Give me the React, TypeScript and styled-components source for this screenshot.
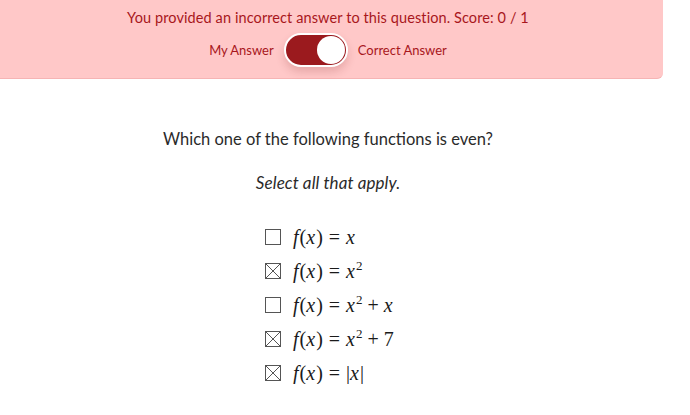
import React from "react";
import styled, { createGlobalStyle } from "styled-components";

const Global = createGlobalStyle`
  html, body { margin: 0; padding: 0; background: #ffffff; overflow: hidden; }
  body { font-family: "Lato", "Open Sans", sans-serif; }
`;

const Page = styled.div`
  width: 656px;
  display: flex;
  flex-direction: column;
  align-items: center;
`;

const Banner = styled.div`
  align-self: stretch;
  margin: 0 -7px;
  height: 79px;
  box-sizing: border-box;
  background: #ffc8c8;
  border-bottom: 1px solid #f6b4b4;
  border-bottom-right-radius: 6px;
  display: flex;
  flex-direction: column;
  align-items: center;
  padding-top: 8px;
  color: #a8171c;
`;

const BannerTitle = styled.div`
  font-size: 14.5px;
  line-height: 20px;
  letter-spacing: 0.1px;
`;

const ToggleRow = styled.div`
  display: flex;
  align-items: center;
  gap: 10px;
  margin-top: 5px;
  font-size: 13px;
`;

const Switch = styled.div`
  width: 64px;
  height: 34px;
  box-sizing: border-box;
  border-radius: 17px;
  background: #9b1a1e;
  border: 2px solid #ffffff;
  display: flex;
  align-items: center;
  justify-content: flex-end;
  padding-right: 1px;
  box-shadow: 0 5px 8px rgba(120, 30, 30, 0.18);
`;

const Knob = styled.div`
  width: 28px;
  height: 28px;
  border-radius: 50%;
  background: #ffffff;
`;

const Question = styled.div`
  margin-top: 49px;
  font-size: 16.5px;
  color: #2a2a2a;
  line-height: 22px;
`;

const Instruction = styled.div`
  margin-top: 22px;
  font-size: 17px;
  font-style: italic;
  color: #2a2a2a;
  line-height: 22px;
  letter-spacing: 0.1px;
`;

const Options = styled.div`
  margin-top: 32px;
  display: flex;
  flex-direction: column;
  gap: 12px;
  align-self: flex-start;
  margin-left: 265px;
`;

const Option = styled.div`
  display: flex;
  align-items: center;
  gap: 12px;
  height: 22px;
`;

const Math = styled.span`
  font-family: "Liberation Serif", "DejaVu Serif", serif;
  font-size: 20px;
  line-height: 22px;
  color: #1a1a1a;
  white-space: nowrap;
`;

const I = styled.i`
  font-style: italic;
  padding-right: 1px;
`;

const Rel = styled.span`
  margin: 0 6px;
`;

const Bin = styled.span`
  margin: 0 5px;
`;

const Sup = styled.sup`
  font-size: 13px;
  vertical-align: 8px;
  line-height: 0;
`;

const Box = ({ checked }: { checked: boolean }) => (
  <svg width="16" height="16" viewBox="0 0 16 16">
    <rect x="0.5" y="0.5" width="15" height="15" fill="none" stroke="#555" strokeWidth="1" />
    {checked && (
      <path d="M1 1 L15 15 M15 1 L1 15" stroke="#555" strokeWidth="1" fill="none" />
    )}
  </svg>
);

const options: { checked: boolean; rhs: React.ReactNode }[] = [
  { checked: false, rhs: <I>x</I> },
  { checked: true, rhs: <><I>x</I><Sup>2</Sup></> },
  { checked: false, rhs: <><I>x</I><Sup>2</Sup><Bin>+</Bin><I>x</I></> },
  { checked: true, rhs: <><I>x</I><Sup>2</Sup><Bin>+</Bin>7</> },
  { checked: true, rhs: <>|<I>x</I>|</> },
];

export default function App() {
  return (
    <>
      <Global />
      <Page>
        <Banner>
          <BannerTitle>You provided an incorrect answer to this question. Score: 0 / 1</BannerTitle>
          <ToggleRow>
            <span>My Answer</span>
            <Switch>
              <Knob />
            </Switch>
            <span>Correct Answer</span>
          </ToggleRow>
        </Banner>
        <Question>Which one of the following functions is even?</Question>
        <Instruction>Select all that apply.</Instruction>
        <Options>
          {options.map((o, i) => (
            <Option key={i}>
              <Box checked={o.checked} />
              <Math>
                <I>f</I>(<I>x</I>)<Rel>=</Rel>
                {o.rhs}
              </Math>
            </Option>
          ))}
        </Options>
      </Page>
    </>
  );
}
